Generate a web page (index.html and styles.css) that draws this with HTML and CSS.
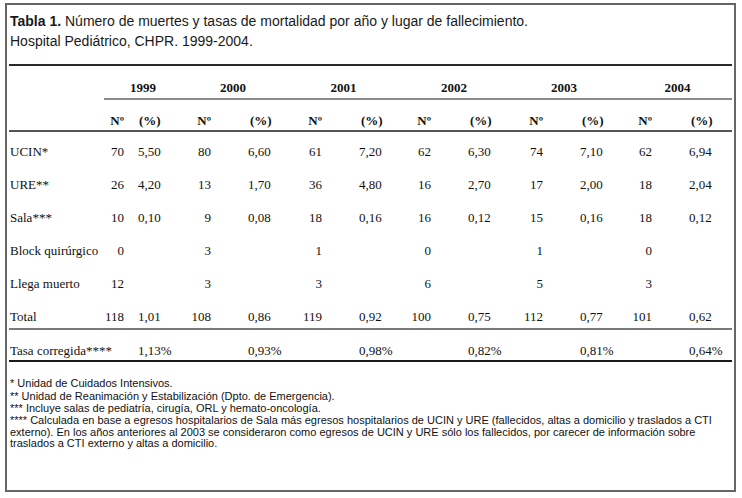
FILE: index.html
```html
<!DOCTYPE html>
<html lang="es">
<head>
<meta charset="utf-8">
<title>Tabla 1</title>
<link rel="stylesheet" href="styles.css">
</head>
<body>
<div class="frame">
  <p class="caption"><b>Tabla 1.</b> Número de muertes y tasas de mortalidad por año y lugar de fallecimiento.<br>Hospital Pediátrico, CHPR. 1999-2004.</p>
  <table class="data">
    <colgroup>
      <col style="width:95px"><col style="width:27px"><col style="width:43px">
      <col style="width:55px"><col style="width:55px">
      <col style="width:56px"><col style="width:55px">
      <col style="width:54px"><col style="width:56px">
      <col style="width:56px"><col style="width:54px">
      <col style="width:55px"><col style="width:62px">
    </colgroup>
    <thead>
      <tr class="years">
        <th></th>
        <th colspan="2" class="year">1999</th>
        <th colspan="2" class="year">2000</th>
        <th colspan="2" class="year">2001</th>
        <th colspan="2" class="year">2002</th>
        <th colspan="2" class="year">2003</th>
        <th colspan="2" class="year">2004</th>
      </tr>
      <tr class="units">
        <th></th>
        <th>Nº</th><th>(%)</th>
        <th>Nº</th><th>(%)</th>
        <th>Nº</th><th>(%)</th>
        <th>Nº</th><th>(%)</th>
        <th>Nº</th><th>(%)</th>
        <th>Nº</th><th>(%)</th>
      </tr>
    </thead>
    <tbody>
      <tr><td>UCIN*</td><td>70</td><td>5,50</td><td>80</td><td>6,60</td><td>61</td><td>7,20</td><td>62</td><td>6,30</td><td>74</td><td>7,10</td><td>62</td><td>6,94</td></tr>
      <tr><td>URE**</td><td>26</td><td>4,20</td><td>13</td><td>1,70</td><td>36</td><td>4,80</td><td>16</td><td>2,70</td><td>17</td><td>2,00</td><td>18</td><td>2,04</td></tr>
      <tr><td>Sala***</td><td>10</td><td>0,10</td><td>9</td><td>0,08</td><td>18</td><td>0,16</td><td>16</td><td>0,12</td><td>15</td><td>0,16</td><td>18</td><td>0,12</td></tr>
      <tr><td>Block quirúrgico</td><td>0</td><td></td><td>3</td><td></td><td>1</td><td></td><td>0</td><td></td><td>1</td><td></td><td>0</td><td></td></tr>
      <tr><td>Llega muerto</td><td>12</td><td></td><td>3</td><td></td><td>3</td><td></td><td>6</td><td></td><td>5</td><td></td><td>3</td><td></td></tr>
      <tr class="total"><td>Total</td><td>118</td><td>1,01</td><td>108</td><td>0,86</td><td>119</td><td>0,92</td><td>100</td><td>0,75</td><td>112</td><td>0,77</td><td>101</td><td>0,62</td></tr>
      <tr class="rate"><td>Tasa corregida****</td><td></td><td>1,13%</td><td></td><td>0,93%</td><td></td><td>0,98%</td><td></td><td>0,82%</td><td></td><td>0,81%</td><td></td><td>0,64%</td></tr>
    </tbody>
  </table>
  <div class="notes">
    <p class="note-a">* Unidad de Cuidados Intensivos.<br>** Unidad de Reanimación y Estabilización (Dpto. de Emergencia).<br>*** Incluye salas de pediatría, cirugía, ORL y hemato-oncología.</p>
    <p class="note-b">**** Calculada en base a egresos hospitalarios de Sala más egresos hospitalarios de UCIN y URE (fallecidos, altas a domicilio y traslados a CTI<br>externo). En los años anteriores al 2003 se consideraron como egresos de UCIN y URE sólo los fallecidos, por carecer de información sobre<br>traslados a CTI externo y altas a domicilio.</p>
  </div>
</div>
</body>
</html>
```
FILE: styles.css
```css
html, body {
  margin: 0;
  padding: 0;
  background: #fff;
}

.frame {
  box-sizing: border-box;
  width: 731px;
  height: 489px;
  margin: 3px 0 0 5px;
  border: 2px solid #666;
  padding: 0 1px 0 2px;
}

.caption {
  margin: 6px 0 0 1px;
  font-family: "Liberation Sans", Arial, sans-serif;
  font-size: 14px;
  line-height: 20px;
  color: #1a1a1a;
}

.data {
  margin-top: 13px;
  width: 723px;
  table-layout: fixed;
  border-collapse: separate;
  border-spacing: 0;
  border-top: 2px solid #2a2a2a;
  font-family: "Liberation Serif", "Times New Roman", serif;
  font-size: 13px;
  line-height: 15px;
  color: #111;
}

.data th,
.data td {
  padding: 0;
  vertical-align: top;
  white-space: nowrap;
}

.data th {
  font-weight: bold;
}

/* year row */
.years th {
  padding: 14px 0 3px;
}
.years .year {
  text-align: center;
  padding-left: 8px;
  border-bottom: 2px solid #8c8c8c;
}

/* unit row */
.units th {
  padding: 13px 0 2px;
  border-bottom: 2px solid #555;
}

/* body rows */
.data tbody td {
  padding: 12px 0 6px;
}
.data tbody td:first-child {
  padding-left: 1px;
}

/* count columns right aligned, percent columns left aligned */
.data th:nth-child(2n),
.data td:nth-child(2n) {
  text-align: right;
  padding-right: 18px;
}
.data th:nth-child(2n+3),
.data td:nth-child(2n+3) {
  text-align: left;
  padding-left: 19px;
}
.units th:nth-child(2n+3) {
  padding-left: 21px;
}
.data th:nth-child(2),
.data td:nth-child(2) {
  padding-right: 7px;
}
.data td:nth-child(3) {
  padding-left: 7px;
}
.units th:nth-child(3) {
  padding-left: 8px;
}
.years .year:nth-child(n) {
  text-align: center;
  padding-right: 0;
  padding-left: 8px;
}

.data tr.total td {
  padding-bottom: 4px;
  border-bottom: 2px solid #7a7a7a;
}
.data tr.rate td {
  padding-top: 13px;
  padding-bottom: 2px;
  border-bottom: 2px solid #1a1a1a;
}

.notes {
  margin: 15px 0 0 1px;
  font-family: "Liberation Sans", Arial, sans-serif;
  font-size: 11px;
  color: #111;
  white-space: nowrap;
}
.notes p {
  margin: 0;
}
.note-a {
  line-height: 12.7px;
}
.note-b {
  line-height: 11.6px;
}
```
